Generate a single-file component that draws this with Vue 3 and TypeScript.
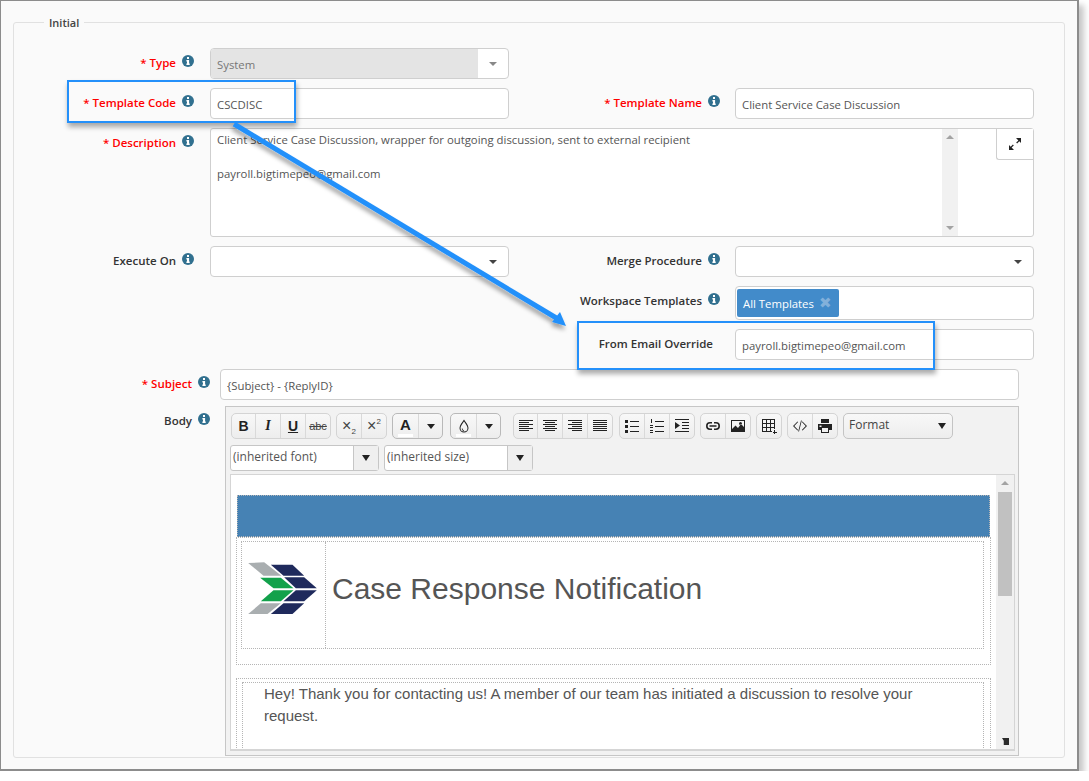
<template>
  <div class="frame">
    <fieldset class="box">
      <legend>Initial</legend>

      <div class="form-grid">
        <div class="lab req">* Type <i class="info"><svg viewBox="0 0 12 12"><circle cx="6" cy="6" r="6" /><path class="iw" d="M5 2h2v2H5zM4.400 5h2.700v3.600h.6V10H4.400V8.600H5V6.400h-.6z" /></svg></i></div>
        <div class="ctl sel disabled"><span class="val">System</span><span class="caret-box"><b class="caret light"></b></span></div>
        <div class="rest"></div>

        <div class="lab req">* Template Code <i class="info"><svg viewBox="0 0 12 12"><circle cx="6" cy="6" r="6" /><path class="iw" d="M5 2h2v2H5zM4.400 5h2.700v3.600h.6V10H4.400V8.600H5V6.400h-.6z" /></svg></i></div>
        <div class="ctl"><span class="val">CSCDISC</span></div>
        <div class="lab right req">* Template Name <i class="info"><svg viewBox="0 0 12 12"><circle cx="6" cy="6" r="6" /><path class="iw" d="M5 2h2v2H5zM4.400 5h2.700v3.600h.6V10H4.400V8.600H5V6.400h-.6z" /></svg></i></div>
        <div class="ctl"><span class="val">Client Service Case Discussion</span></div>

        <div class="lab req">* Description <i class="info"><svg viewBox="0 0 12 12"><circle cx="6" cy="6" r="6" /><path class="iw" d="M5 2h2v2H5zM4.400 5h2.700v3.600h.6V10H4.400V8.600H5V6.400h-.6z" /></svg></i></div>
        <div class="desc">
          <div class="desc-text">
            <p>Client Service Case Discussion, wrapper for outgoing discussion, sent to external recipient</p>
            <p>payroll.bigtimepeo@gmail.com</p>
          </div>
          <div class="desc-bar"><b class="mini up"></b><b class="mini down"></b></div>
          <div class="desc-side">
            <button class="expand">
              <svg viewBox="0 0 14 14" width="14" height="14"><path d="M8 1h5v5l-1.700-1.700-2.200 2.200-.9-.9 2.200-2.200zM1 13V8l1.700 1.700 2.200-2.200.9.9-2.200 2.200L6 13z" /></svg>
            </button>
          </div>
        </div>

        <div class="lab">Execute On <i class="info"><svg viewBox="0 0 12 12"><circle cx="6" cy="6" r="6" /><path class="iw" d="M5 2h2v2H5zM4.400 5h2.700v3.600h.6V10H4.400V8.600H5V6.400h-.6z" /></svg></i></div>
        <div class="ctl sel"><span class="val"></span><span class="caret-box"><b class="caret"></b></span></div>
        <div class="lab right">Merge Procedure <i class="info"><svg viewBox="0 0 12 12"><circle cx="6" cy="6" r="6" /><path class="iw" d="M5 2h2v2H5zM4.400 5h2.700v3.600h.6V10H4.400V8.600H5V6.400h-.6z" /></svg></i></div>
        <div class="ctl sel"><span class="val"></span><span class="caret-box"><b class="caret"></b></span></div>

        <div class="gap2"></div>
        <div class="lab right">Workspace Templates <i class="info"><svg viewBox="0 0 12 12"><circle cx="6" cy="6" r="6" /><path class="iw" d="M5 2h2v2H5zM4.400 5h2.700v3.600h.6V10H4.400V8.600H5V6.400h-.6z" /></svg></i></div>
        <div class="ctl multi"><span class="chip">All Templates <em>✖</em></span></div>

        <div class="gap2"></div>
        <div class="lab right plain">From Email Override</div>
        <div class="ctl"><span class="val">payroll.bigtimepeo@gmail.com</span></div>
      </div>

      <div class="wide-row subject-row">
        <div class="lab wide req">* Subject <i class="info"><svg viewBox="0 0 12 12"><circle cx="6" cy="6" r="6" /><path class="iw" d="M5 2h2v2H5zM4.400 5h2.700v3.600h.6V10H4.400V8.600H5V6.400h-.6z" /></svg></i></div>
        <div class="ctl subject"><span class="val">{Subject} - {ReplyID}</span></div>
      </div>

      <div class="wide-row">
        <div class="lab wide body-lab">Body <i class="info"><svg viewBox="0 0 12 12"><circle cx="6" cy="6" r="6" /><path class="iw" d="M5 2h2v2H5zM4.400 5h2.700v3.600h.6V10H4.400V8.600H5V6.400h-.6z" /></svg></i></div>
        <div class="editor">
          <div class="toolbar">
            <div v-for="(group, g) in toolbar" :key="g" class="tgroup" :class="group.cls">
              <span v-for="(t, i) in group.tools" :key="i" class="tbtn" :class="t.cls">
                <svg v-if="t.d" viewBox="0 0 16 16" width="16" height="16"><path :d="t.d" fill-rule="evenodd" /></svg>
                <template v-else>{{ t.text }}<small v-if="t.small">{{ t.small }}</small></template>
                <i v-if="t.swatch" class="swatch"></i>
              </span>
            </div>
            <div class="format"><span>Format</span><b class="caret dark"></b></div>
            <div class="combo"><span>(inherited font)</span><i><b class="caret dark"></b></i></div>
            <div class="combo"><span>(inherited size)</span><i><b class="caret dark"></b></i></div>
          </div>

          <div class="content-wrap">
            <div class="content">
              <div class="banner"></div>
              <div class="dot-table head-table">
                <div class="dot-table inner">
                  <div class="logo-cell">
                    <svg viewBox="60 240 230 180" width="77" height="60">
                      <path fill="#a9aeb0" d="M72 252l48-2 52 40h-54z" />
                      <path fill="#1f2a5c" d="M140 257h65l35 33h-62z" />
                      <path fill="#12a14b" d="M108 296h62l38 32h-60z" />
                      <path fill="#1f2a5c" d="M180 295h60l38 33h-63z" />
                      <path fill="#12a14b" d="M148 334h60l-38 33h-60z" />
                      <path fill="#1f2a5c" d="M215 334h63l-38 33h-62z" />
                      <path fill="#a9aeb0" d="M110 373h60l-40 32H72z" />
                      <path fill="#1f2a5c" d="M178 373h62l-35 32h-65z" />
                    </svg>
                  </div>
                  <h1>Case Response Notification</h1>
                </div>
              </div>
              <div class="dot-table msg-table">
                <div class="dot-table msg-inner">
                  <p>Hey! Thank you for contacting us! A member of our team has initiated a discussion to resolve your request.</p>
                </div>
              </div>
            </div>
            <div class="content-bar">
              <b class="mini up"></b>
              <div class="thumb"></div>
              <svg class="grip" viewBox="0 0 8 8" width="7" height="7"><path fill="#2b2b2b" d="M0 0h8v8H2V3z" /></svg>
            </div>
          </div>
        </div>
      </div>
    </fieldset>

    <!-- callouts drawn on top of the form -->
    <div class="callout c1"></div>
    <div class="callout c2"></div>
    <svg class="arrow" width="1089" height="781" viewBox="0 0 1089 781">
      <defs>
        <filter id="soft" x="-10%" y="-10%" width="120%" height="120%">
          <feDropShadow dx="-1" dy="4" stdDeviation="2" flood-color="#000" flood-opacity="0.35" />
        </filter>
      </defs>
      <g filter="url(#soft)">
        <path d="M234 124L558 319" stroke="#2490fa" stroke-width="5" fill="none" />
        <path d="M566 326L552 322L560 312z" fill="#2490fa" />
      </g>
    </svg>
  </div>
</template>

<script setup lang="ts">
interface Tool {
  text?: string
  small?: string
  d?: string
  cls?: string
  swatch?: boolean
}

interface Group {
  tools: Tool[]
  cls?: string
}

// horizontal bars [x, y, w, h] turned into one path
function bars(list: number[][]) {
  return list.map(([x, y, w, h]) => `M${x} ${y}h${w}v${h ?? 1}h-${w}z`).join("")
}

const caretIcon = "M4 6h8l-4 5z"

const toolbar: Group[] = [
  {
    cls: "first four",
    tools: [
      { text: "B", cls: "t-b" },
      { text: "I", cls: "t-i" },
      { text: "U", cls: "t-u" },
      { text: "abc", cls: "t-s" },
    ],
  },
  {
    tools: [
      { text: "×", small: "2", cls: "t-x sub" },
      { text: "×", small: "2", cls: "t-x sup" },
    ],
  },
  {
    cls: "raised",
    tools: [
      { text: "A", cls: "t-a", swatch: true },
      { d: caretIcon, cls: "t-c" },
    ],
  },
  {
    cls: "raised back",
    tools: [
      {
        d: "M8 1.500c1.500 2.500 4.500 5.500 4.500 8.500a4.500 4.500 0 0 1-9 0c0-3 3-6 4.500-8.500zM8 3.400C6.800 5.200 4.500 7.800 4.500 10a3.500 3.500 0 0 0 7 0C11.500 7.800 9.200 5.200 8 3.400zM5.800 10.500h.8c0 1 .5 1.600 1.400 1.900v.8c-1.300-.3-2.200-1.400-2.200-2.700z",
        swatch: true,
      },
      { d: caretIcon, cls: "t-c" },
    ],
  },
  {
    cls: "four aligns",
    tools: [
      { d: bars([[1, 2, 14], [1, 4, 10], [1, 6, 14], [1, 8, 10], [1, 10, 14], [1, 12, 10]]) },
      { d: bars([[1, 2, 14], [3, 4, 10], [1, 6, 14], [3, 8, 10], [1, 10, 14], [3, 12, 10]]) },
      { d: bars([[1, 2, 14], [5, 4, 10], [1, 6, 14], [5, 8, 10], [1, 10, 14], [5, 12, 10]]) },
      { d: bars([[1, 2, 14], [1, 4, 14], [1, 6, 14], [1, 8, 14], [1, 10, 14], [1, 12, 14]]) },
    ],
  },
  {
    tools: [
      { d: bars([[1, 2, 3, 3], [6, 3, 9], [1, 7, 3, 3], [6, 8, 9], [1, 12, 3, 3], [6, 13, 9]]) },
      { d: bars([[2, 1, 1, 4], [6, 3, 9], [1, 7, 3, 1], [1, 9, 3, 1], [6, 8, 9], [1, 12, 3, 1], [1, 14, 3, 1], [6, 13, 9]]) },
      { d: bars([[1, 1, 14], [8, 4, 7], [8, 7, 7], [8, 10, 7], [1, 13, 14]]) + "M1 4l5 3.500L1 11z" },
    ],
  },
  {
    tools: [
      { d: "M7 4H5a4 4 0 0 0 0 8h2v-1.600H5a2.400 2.400 0 0 1 0-4.800h2zM9 4h2a4 4 0 0 1 0 8H9v-1.600h2a2.400 2.400 0 0 0 0-4.800H9zM4.500 7.200h7v1.600h-7z" },
      { d: "M1 2h14v12H1zM2 3v8l3.500-3.500L8 10l3-4 3 3V3zM10.500 4a1.500 1.500 0 1 1 0 3 1.500 1.500 0 0 1 0-3z" },
    ],
  },
  {
    tools: [
      {
        cls: "nz",
        d: bars([[1, 1, 12], [1, 5, 12], [1, 9, 12], [1, 13, 10], [1, 1, 1, 13], [5, 1, 1, 13], [9, 1, 1, 13], [13, 1, 1, 10], [12, 14, 4], [13, 12, 1, 4]]),
      },
    ],
  },
  {
    tools: [
      { d: "M5.500 3.500l.6.6L2.300 8l3.800 3.900-.6.6L1 8zM10.500 3.500L15 8l-4.500 4.500-.6-.6L13.700 8 9.900 4.100zM9 2.500h.8L7 13.500h-.8z" },
      { d: "M4 1h8v4H4zM1 6h14v6h-3v3H4v-3H1zM5 10v4h6v-4zM2.500 7.500v1.500h2V7.500z" },
    ],
  },
]
</script>

<style>
html,
body {
  background: #fff;
}
</style>

<style scoped>
.frame {
  position: relative;
  box-sizing: border-box;
  width: 1079px;
  height: 771px;
  padding: 14px 12px 0 12px;
  background: #fafafa;
  border: 1px solid #8c8c8c;
  border-width: 1px 2px 2px 1px;
  box-shadow: 5px 5px 6px rgba(0, 0, 0, 0.22);
  font-family: "Open Sans", sans-serif;
  font-size: 11.35px;
  color: #555;
}

.box {
  box-sizing: border-box;
  height: 743px;
  margin: 0;
  padding: 18px 0 0;
  border: 1px solid #e1e1e1;
  border-radius: 3px;
}

.box legend {
  margin-left: 30px;
  padding: 0 5px;
  font-weight: 600;
  font-size: 11px;
  color: #444;
}

.form-grid {
  display: grid;
  grid-template-columns: 196px 299px 226px 299px;
  row-gap: 9px;
}

.lab {
  display: flex;
  justify-content: flex-end;
  align-items: flex-start;
  gap: 6px;
  padding: 6px 16px 0 0;
  font-weight: 600;
  font-size: 11.5px;
  line-height: 17px;
  color: #333;
  white-space: nowrap;
}

.lab.right {
  padding-right: 15px;
}

.lab.req {
  color: #f00;
}

.lab.plain {
  padding-right: 22px;
  padding-top: 6px;
}

.lab.wide {
  width: 206px;
  box-sizing: border-box;
  flex: none;
  padding-right: 10px;
}

.info {
  display: block;
  width: 12px;
  height: 12px;
  margin-top: 1px;
}

.info svg {
  display: block;
  fill: #31708f;
}

.iw {
  fill: #fff;
}

.ctl {
  box-sizing: border-box;
  display: flex;
  align-items: center;
  height: 31px;
  background: #fff;
  border: 1px solid #cfcfcf;
  border-radius: 4px;
}

.val {
  flex: 1;
  padding: 2px 6px 0;
  white-space: pre;
}

.rest {
  grid-column: 3 / 5;
}

.gap2 {
  grid-column: 1 / 3;
}

.sel.disabled .val {
  align-self: stretch;
  display: flex;
  align-items: center;
  background: #e4e4e4;
  border-radius: 3px 0 0 3px;
  color: #777;
}

.caret-box {
  display: flex;
  justify-content: center;
  align-items: center;
  width: 30px;
  align-self: stretch;
}

.caret {
  display: block;
  width: 0;
  height: 0;
  border-left: 4px solid transparent;
  border-right: 4px solid transparent;
  border-top: 4px solid #444;
}

.caret.light {
  border-top-color: #888;
}

.caret.dark {
  border-left-width: 4.500px;
  border-right-width: 4.500px;
  border-top: 6px solid #222;
}

.desc {
  grid-column: 2 / 5;
  box-sizing: border-box;
  display: flex;
  height: 109px;
  background: #fff;
  border: 1px solid #cfcfcf;
  border-radius: 3px;
}

.desc-text {
  flex: none;
  width: 731px;
  padding: 2px 6px;
  box-sizing: border-box;
  line-height: 17px;
}

.desc-text p {
  margin: 0 0 17px;
}

.desc-bar {
  flex: none;
  width: 16px;
  display: flex;
  flex-direction: column;
  justify-content: space-between;
  align-items: center;
  padding: 6px 0;
  box-sizing: border-box;
  background: #f1f1f1;
}

.mini {
  display: block;
  width: 0;
  height: 0;
  border-left: 4px solid transparent;
  border-right: 4px solid transparent;
}

.mini.up {
  border-bottom: 4px solid #a3a3a3;
}

.mini.down {
  border-top: 4px solid #a3a3a3;
}

.desc-side {
  flex: 1;
  display: flex;
  justify-content: flex-end;
  align-items: flex-start;
}

.expand {
  display: flex;
  align-items: center;
  justify-content: center;
  width: 37px;
  height: 31px;
  padding: 0;
  background: #fff;
  border: solid #cfcfcf;
  border-width: 0 0 1px 1px;
  border-radius: 0 0 0 3px;
}

.expand svg {
  fill: #222;
}

.multi {
  height: 34px;
  padding-left: 1px;
}

.chip {
  display: flex;
  align-items: center;
  gap: 5px;
  height: 28px;
  padding: 0 8px 0 6px;
  background: #428bca;
  border-radius: 2px;
  color: #fff;
  white-space: nowrap;
}

.chip em {
  font-family: "DejaVu Sans", sans-serif;
  font-style: normal;
  font-size: 15px;
  line-height: 15px;
  color: #82b0da;
}

.wide-row {
  display: flex;
  margin-top: 6px;
}

.subject-row {
  margin-top: 9px;
}

.subject {
  width: 799px;
  flex: none;
}

.body-lab {
  padding-top: 6px;
}

.editor {
  box-sizing: border-box;
  width: 794px;
  height: 350px;
  margin-left: 5px;
  padding: 0 3px 4px 4px;
  background: #f2f2f2;
  border: 1px solid #c6c6c6;
}

.toolbar {
  display: flex;
  flex-wrap: wrap;
  align-items: flex-start;
  column-gap: 5px;
  row-gap: 3px;
  height: 67px;
  padding-top: 6px;
  box-sizing: border-box;
  font-size: 12px;
}

.tgroup {
  display: flex;
  height: 26px;
  box-sizing: border-box;
  border: 1px solid #d4d4d4;
  border-radius: 5px;
  background: linear-gradient(#f8f8f8, #ededed);
}

.tgroup.first {
  margin-left: 1px;
}

.tgroup.raised {
  border-color: #b9b9b9;
}

.tgroup.back {
  margin: 0 7px 0 2px;
}

.tgroup.aligns {
  margin-right: 1px;
}

.tbtn {
  position: relative;
  display: flex;
  align-items: center;
  justify-content: center;
  width: 25px;
  border-left: 1px solid #d9d9d9;
  font-family: "Liberation Sans", sans-serif;
  font-size: 14px;
  color: #222;
  box-sizing: border-box;
}

.tbtn:first-child {
  border-left: 0;
  width: 24px;
}

.four .tbtn:first-child {
  width: 23px;
}

.tbtn svg {
  fill: #222;
}

.nz path {
  fill-rule: nonzero;
}

.t-b {
  font-weight: 700;
}

.t-i {
  font-style: italic;
  font-family: "Liberation Serif", serif;
  font-weight: 700;
}

.t-u {
  font-weight: 700;
  text-decoration: underline;
}

.t-s {
  font-size: 11px;
  text-decoration: line-through;
  color: #444;
}

.t-x {
  font-size: 16px;
  color: #444;
}

.t-x small {
  font-size: 8px;
}

.sub small {
  transform: translateY(5px);
}

.sup small {
  transform: translateY(-5px);
}

.t-a {
  padding-bottom: 4px;
  font-size: 15px;
  font-weight: 700;
}

.t-c {
  width: 24px;
}

.raised .tbtn:first-child {
  width: 25px;
}

.swatch {
  position: absolute;
  left: 5px;
  right: 5px;
  bottom: 1px;
  height: 3px;
  background: #fff;
}

.format {
  box-sizing: border-box;
  display: flex;
  justify-content: space-between;
  align-items: center;
  width: 110px;
  height: 26px;
  padding: 0 6px 3px 5px;
  border: 1px solid #c4c4c4;
  border-radius: 5px;
  background: linear-gradient(#f8f8f8, #ededed);
  color: #444;
}

.format .caret {
  margin-top: 3px;
}

.combo {
  box-sizing: border-box;
  display: flex;
  width: 149px;
  height: 26px;
  background: #fff;
  border: 1px solid #c6c6c6;
  border-radius: 3px;
}

.combo span {
  flex: 1;
  padding-left: 2px;
  line-height: 21px;
  color: #555;
}

.combo i {
  display: flex;
  align-items: center;
  justify-content: center;
  width: 24px;
  background: #efefef;
  border-left: 1px solid #c6c6c6;
}

.content-wrap {
  display: flex;
  box-sizing: border-box;
  height: 277px;
  border: solid #d5d5d5;
  border-width: 1px 1px 2px;
  background: #fff;
  overflow: hidden;
}

.content {
  flex: 1;
  min-width: 0;
  padding: 20px 5px 0;
  overflow: hidden;
  font-family: "Liberation Sans", sans-serif;
  color: #555;
}

.banner {
  height: 42px;
  margin: 0 1px;
  background: #4682b4;
  outline: 1px dotted #b5b5b5;
  outline-offset: -1px;
}

.dot-table {
  box-sizing: border-box;
  border: 1px dotted #b5b5b5;
}

.head-table {
  height: 128px;
  padding: 3px 6px 0 4px;
}

.inner {
  display: flex;
  height: 108px;
}

.logo-cell {
  box-sizing: border-box;
  flex: none;
  width: 84px;
  padding: 17px 0 0 2px;
  border-right: 1px dotted #b5b5b5;
}

.logo-cell svg {
  display: block;
}

.inner h1 {
  margin: 28px 0 0 6px;
  font-weight: 400;
  font-size: 30px;
  line-height: 38px;
  color: #555;
}

.msg-table {
  margin-top: 13px;
  padding: 3px 6px 0 5px;
  height: 120px;
}

.msg-inner {
  height: 200px;
  padding: 0 60px 0 21px;
  font-size: 15px;
  line-height: 22px;
}

.msg-inner p {
  margin: 0;
}

.content-bar {
  position: relative;
  flex: none;
  width: 18px;
  padding: 6px 2px 0;
  box-sizing: border-box;
  background: #f1f1f1;
}

.content-bar .mini {
  margin: 0 auto;
}

.thumb {
  height: 104px;
  margin-top: 7px;
  background: #c1c1c1;
}

.grip {
  position: absolute;
  right: 5px;
  bottom: 4px;
}

.callout {
  position: absolute;
  box-sizing: border-box;
  border: 2px solid #2490fa;
  box-shadow: 1px 4px 5px rgba(0, 0, 0, 0.33);
}

.c1 {
  left: 66px;
  top: 79px;
  width: 229px;
  height: 43px;
}

.c2 {
  left: 576px;
  top: 320px;
  width: 358px;
  height: 49px;
}

.arrow {
  position: absolute;
  left: -1px;
  top: -1px;
  pointer-events: none;
}
</style>
